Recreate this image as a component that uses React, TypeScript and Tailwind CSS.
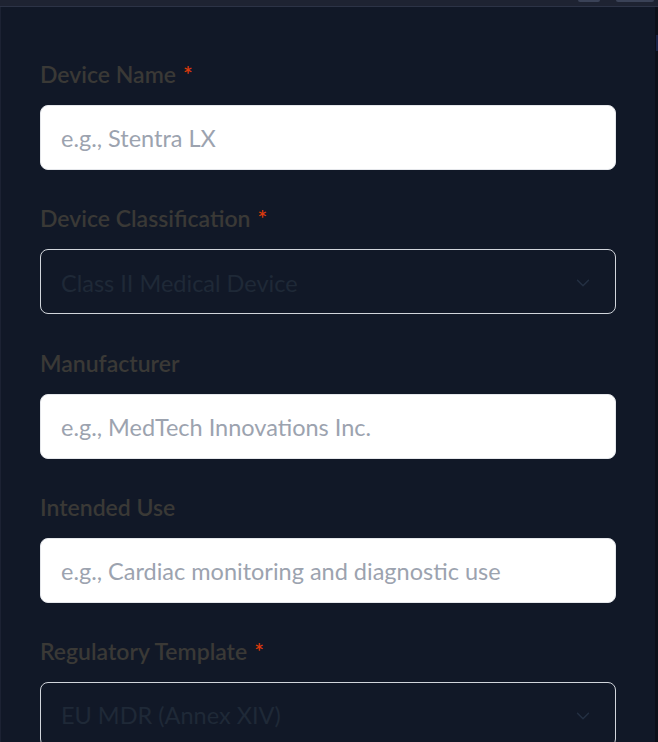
import React from "react";

type Field = {
  label: string;
  required?: boolean;
  kind: "input" | "select";
  value: string;
};

const fields: Field[] = [
  { label: "Device Name", required: true, kind: "input", value: "e.g., Stentra LX" },
  { label: "Device Classification", required: true, kind: "select", value: "Class II Medical Device" },
  { label: "Manufacturer", kind: "input", value: "e.g., MedTech Innovations Inc." },
  { label: "Intended Use", kind: "input", value: "e.g., Cardiac monitoring and diagnostic use" },
  { label: "Regulatory Template", required: true, kind: "select", value: "EU MDR (Annex XIV)" },
];

const Chevron = () => (
  <svg width="22" height="22" viewBox="0 0 24 24" fill="none" stroke="currentColor" strokeWidth="1.5" strokeLinecap="round" strokeLinejoin="round">
    <path d="m6 9 6 6 6-6" />
  </svg>
);

export default function App() {
  return (
    <div
      className="h-[742px] w-[658px] overflow-hidden bg-[#1e2332] flex flex-col"
      style={{ fontFamily: 'Lato, "Noto Sans", sans-serif' }}
    >
      {/* top strip */}
      <div className="h-[7px] shrink-0 border-b border-[#2c3346] flex justify-end gap-4 pr-1">
        <div className="w-[22px] h-[2px] bg-[#3a4257] rounded-b" />
        <div className="w-[38px] h-[2px] bg-[#3a4257] rounded-b" />
      </div>

      <div className="flex flex-1">
        <div className="flex-1 bg-[#111827] border-l border-[#1c2233] px-[39px] pt-[53px]">
          {fields.map((f) => (
            <div key={f.label} className="mb-[34.25px]">
              <label className="block h-[28px] text-[23px] leading-[28px] font-semibold text-[#3a3936] mb-[17px]">
                {f.label}
                {f.required && <span className="text-[#dc3a0c] ml-[7px]">*</span>}
              </label>
              {f.kind === "input" ? (
                <div className="h-[65px] w-[576px] rounded-lg bg-white border border-[#e5e7eb] flex items-center px-[20px] pt-[3px] text-[23.5px] text-[#9ca3af]">
                  {f.value}
                </div>
              ) : (
                <div className="h-[65px] w-[576px] rounded-lg border border-[#d1d5db] flex items-center justify-between px-[20px] pt-[3px] text-[23.5px] text-[#1f2937]">
                  <span>{f.value}</span>
                  <span className="text-[#243043] mr-[1px]">
                    <Chevron />
                  </span>
                </div>
              )}
            </div>
          ))}
        </div>
        <div className="w-[3px] bg-[#0c101a] flex flex-col pt-[28px]">
          <div className="h-[16px] w-[2px] ml-[1px] bg-[#1b2447]" />
        </div>
      </div>
    </div>
  );
}
